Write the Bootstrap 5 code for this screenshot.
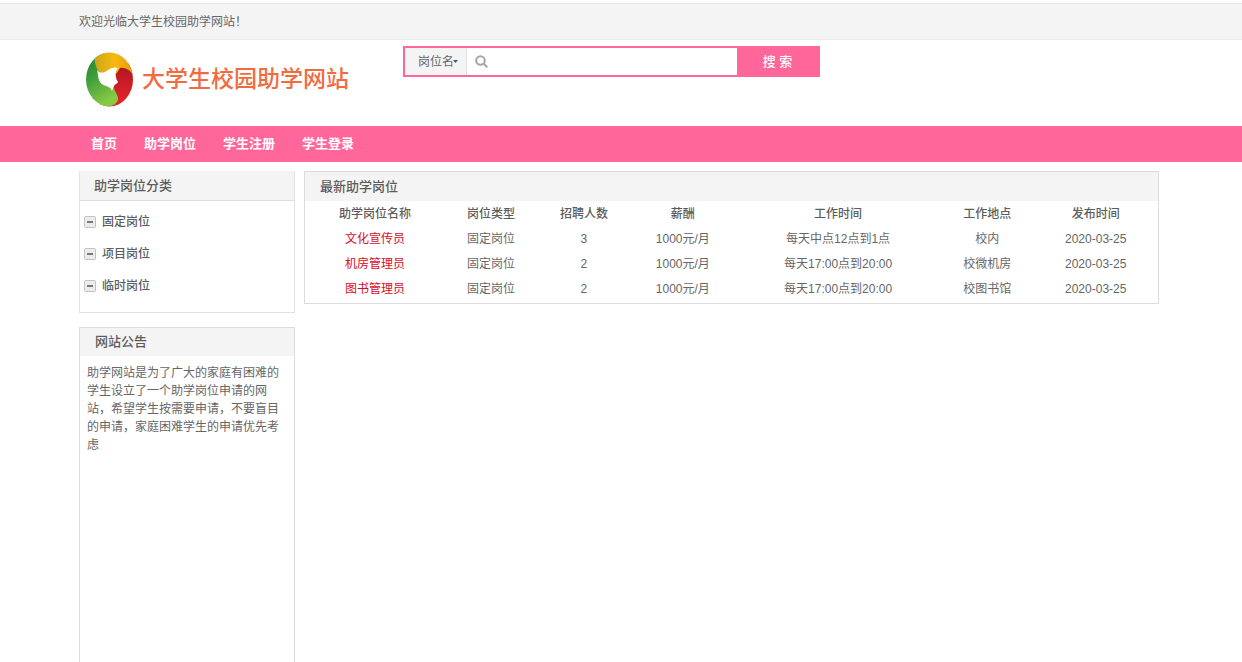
<!DOCTYPE html>
<html lang="zh-CN">
<head>
<meta charset="utf-8">
<meta name="viewport" content="width=device-width, initial-scale=1">
<title>大学生校园助学网站</title>
<link rel="stylesheet" href="https://cdn.jsdelivr.net/npm/bootstrap@5.3.0/dist/css/bootstrap.min.css">
<style>
  :root { --pink: #ff6699; --soft: #f4f4f4; --line: #dcdcdc; }
  body { font: 12px/18px "Liberation Sans", "Noto Sans CJK SC", sans-serif; color: #666; background: #fff; }
  .page-wrap { width: 100%; max-width: 1084px; margin: 0 auto; padding-right: 4px; }
  .welcome { margin-top: 3px; padding-top: 1px; background: var(--soft); border-top: 1px solid #e6e6e6; border-bottom: 1px solid #ebebeb; line-height: 34px; }
  .masthead { min-height: 86px; }
  .brand { width: 324px; padding: 11px 0 0 6px; gap: 7px; color: #f26b3f; font-size: 23px; font-weight: 500; line-height: 54px; }
  .brand:hover { color: #f26b3f; }
  .search { width: 417px; height: 31px; margin-top: 6px; border: 2px solid var(--pink); }
  .search select { width: 62px; padding: 0 0 0 13px; border: 0; border-right: 1px solid #e0e0e0; border-radius: 0; color: #666; appearance: none; outline: 0;
    background: var(--soft) url("data:image/svg+xml,%3Csvg xmlns='http://www.w3.org/2000/svg' width='5' height='3'%3E%3Cpath d='M0 0h5L2.500 3z' fill='%23555'/%3E%3C/svg%3E") no-repeat 48px 12px; }
  .search input { min-width: 0; border: 0; outline: 0; }
  .search button { width: 81px; border: 0; background: var(--pink); color: #fff; font-size: 13px; font-weight: 500; }
  .mainnav { background: var(--pink); }
  .mainnav .nav { gap: 27px; padding-left: 12px; }
  .mainnav a { color: #fff; font-size: 13px; font-weight: 700; line-height: 36px; }
  .content-row { gap: 9px; padding-top: 9px; }
  .side { width: 216px; gap: 14px; }
  .panel { border: 1px solid var(--line); }
  .panel h2 { margin: 0; padding-left: 15px; background: var(--soft); font-size: 13px; font-weight: 500; line-height: 29px; color: #5c5c5c; }
  .cats { border-color: #e2e2e2; border-top-color: #f0f0f0; }
  .cats h2, .notice h2 { line-height: 28px; }
  .cats h2 { border-bottom: 1px solid var(--line); padding-left: 14px; }
  .cats ul { padding: 5px 4px 10px; }
  .cats li { gap: 6px; height: 32px; }
  .cats a { color: #5c5c5c; font-weight: 500; }
  .notice { border-bottom: 0; }
  .notice p { padding: 8px 7px; }
  .jobs { table-layout: fixed; line-height: 25px; text-align: center; margin: 1px 0; }
  .jobs th, .jobs td { padding: 0; }
  .jobs th { color: #5c5c5c; font-weight: 500; text-align: center; }
  .jobs a { color: #d90b1c; }
  .w-name { width: 16.4%; } .w-type { width: 10.8%; } .w-count { width: 11%; } .w-pay { width: 12.2%; }
  .w-time { width: 24.2%; } .w-place { width: 10.8%; }
</style>
</head>
<body>
<div class="d-flex flex-column min-vh-100">
  <div class="welcome"><div class="page-wrap">欢迎光临大学生校园助学网站！</div></div>

  <header class="page-wrap masthead d-flex align-items-start">
    <a href="#" class="brand d-flex align-items-center text-decoration-none flex-shrink-0">
      <svg width="50" height="56" viewBox="0 0 50 56" aria-hidden="true">
        <defs>
          <linearGradient id="gy" x1="0" y1="0" x2="1" y2="0"><stop offset="0" stop-color="#c9a81c"/><stop offset=".5" stop-color="#f8b90f"/><stop offset="1" stop-color="#e8960c"/></linearGradient>
          <linearGradient id="gg" x1="0" y1="0" x2=".4" y2="1"><stop offset="0" stop-color="#1f7c34"/><stop offset=".5" stop-color="#3f9f3a"/><stop offset="1" stop-color="#86c944"/></linearGradient>
          <linearGradient id="gr" x1="0" y1="0" x2="0" y2="1"><stop offset="0" stop-color="#a81420"/><stop offset=".5" stop-color="#cc1f28"/><stop offset="1" stop-color="#ea2229"/></linearGradient>
          <clipPath id="disc"><ellipse cx="24.500" cy="28.500" rx="23.500" ry="27"/></clipPath>
        </defs>
        <g clip-path="url(#disc)">
          <path fill="url(#gr)" d="M15 12h35v44H15z"/>
          <path fill="url(#gg)" d="M0 0h18l12 40c3 5 4 8 2 11-3 4-8 5-13 5H0z"/>
          <path fill="url(#gy)" d="M11 4 14 0h36v24h-2c-3-5-8-8-13-7l-3 5-9 3-10-5c-2-5-5-11-2-16z"/>
          <path fill="#fff" d="M12 19c2 3 5 3 8 2 3-2 6-4 8-4 2-1 3 0 5 0-2 2-3 5-2 9 0 3 2 4 2 5-1 2-3 2-4 4l-2 5c-1-3-3-4-6-5-4-1-6-3-7-6-1-3-1-6-2-10z"/>
        </g>
      </svg>
      <span>大学生校园助学网站</span>
    </a>
    <form class="search d-flex" role="search" onsubmit="return false">
      <select aria-label="搜索条件"><option>岗位名</option></select>
      <label class="d-flex align-items-center flex-grow-1 bg-white ps-2">
        <svg width="13" height="13" viewBox="0 0 13 13" fill="none" stroke="#a6a6a6" stroke-width="2" aria-hidden="true"><circle cx="5.500" cy="5.500" r="4.300"/><path d="M8.700 8.700 12.300 12.300"/></svg>
        <input type="text" class="flex-grow-1 ms-2" aria-label="关键字">
      </label>
      <button type="submit">搜 索</button>
    </form>
  </header>

  <nav class="mainnav">
    <div class="page-wrap">
      <div class="nav">
        <a class="text-decoration-none" href="#">首页</a>
        <a class="text-decoration-none" href="#">助学岗位</a>
        <a class="text-decoration-none" href="#">学生注册</a>
        <a class="text-decoration-none" href="#">学生登录</a>
      </div>
    </div>
  </nav>

  <main class="page-wrap content-row d-flex flex-grow-1">
    <aside class="side d-flex flex-column flex-shrink-0">
      <section class="panel cats">
        <h2>助学岗位分类</h2>
        <ul class="list-unstyled mb-0">
          <li class="d-flex align-items-center"><svg width="12" height="12" aria-hidden="true"><rect x=".5" y=".5" width="11" height="11" rx="1" fill="#ececec" stroke="#c2c2c2"/><path d="M3 6h6" stroke="#777" stroke-width="2"/></svg><a class="text-decoration-none" href="#">固定岗位</a></li>
          <li class="d-flex align-items-center"><svg width="12" height="12" aria-hidden="true"><rect x=".5" y=".5" width="11" height="11" rx="1" fill="#ececec" stroke="#c2c2c2"/><path d="M3 6h6" stroke="#777" stroke-width="2"/></svg><a class="text-decoration-none" href="#">项目岗位</a></li>
          <li class="d-flex align-items-center"><svg width="12" height="12" aria-hidden="true"><rect x=".5" y=".5" width="11" height="11" rx="1" fill="#ececec" stroke="#c2c2c2"/><path d="M3 6h6" stroke="#777" stroke-width="2"/></svg><a class="text-decoration-none" href="#">临时岗位</a></li>
        </ul>
      </section>
      <section class="panel notice flex-grow-1">
        <h2>网站公告</h2>
        <p class="mb-0">助学网站是为了广大的家庭有困难的学生设立了一个助学岗位申请的网站，希望学生按需要申请，不要盲目的申请，家庭困难学生的申请优先考虑</p>
      </section>
    </aside>
    <section class="panel flex-grow-1 align-self-start">
      <h2>最新助学岗位</h2>
      <table class="jobs w-100">
        <thead>
          <tr><th class="w-name">助学岗位名称</th><th class="w-type">岗位类型</th><th class="w-count">招聘人数</th><th class="w-pay">薪酬</th><th class="w-time">工作时间</th><th class="w-place">工作地点</th><th>发布时间</th></tr>
        </thead>
        <tbody>
          <tr><td><a class="text-decoration-none" href="#">文化宣传员</a></td><td>固定岗位</td><td>3</td><td>1000元/月</td><td>每天中点12点到1点</td><td>校内</td><td>2020-03-25</td></tr>
          <tr><td><a class="text-decoration-none" href="#">机房管理员</a></td><td>固定岗位</td><td>2</td><td>1000元/月</td><td>每天17:00点到20:00</td><td>校微机房</td><td>2020-03-25</td></tr>
          <tr><td><a class="text-decoration-none" href="#">图书管理员</a></td><td>固定岗位</td><td>2</td><td>1000元/月</td><td>每天17:00点到20:00</td><td>校图书馆</td><td>2020-03-25</td></tr>
        </tbody>
      </table>
    </section>
  </main>
</div>
<script src="https://cdn.jsdelivr.net/npm/bootstrap@5.3.0/dist/js/bootstrap.bundle.min.js"></script>
</body>
</html>
